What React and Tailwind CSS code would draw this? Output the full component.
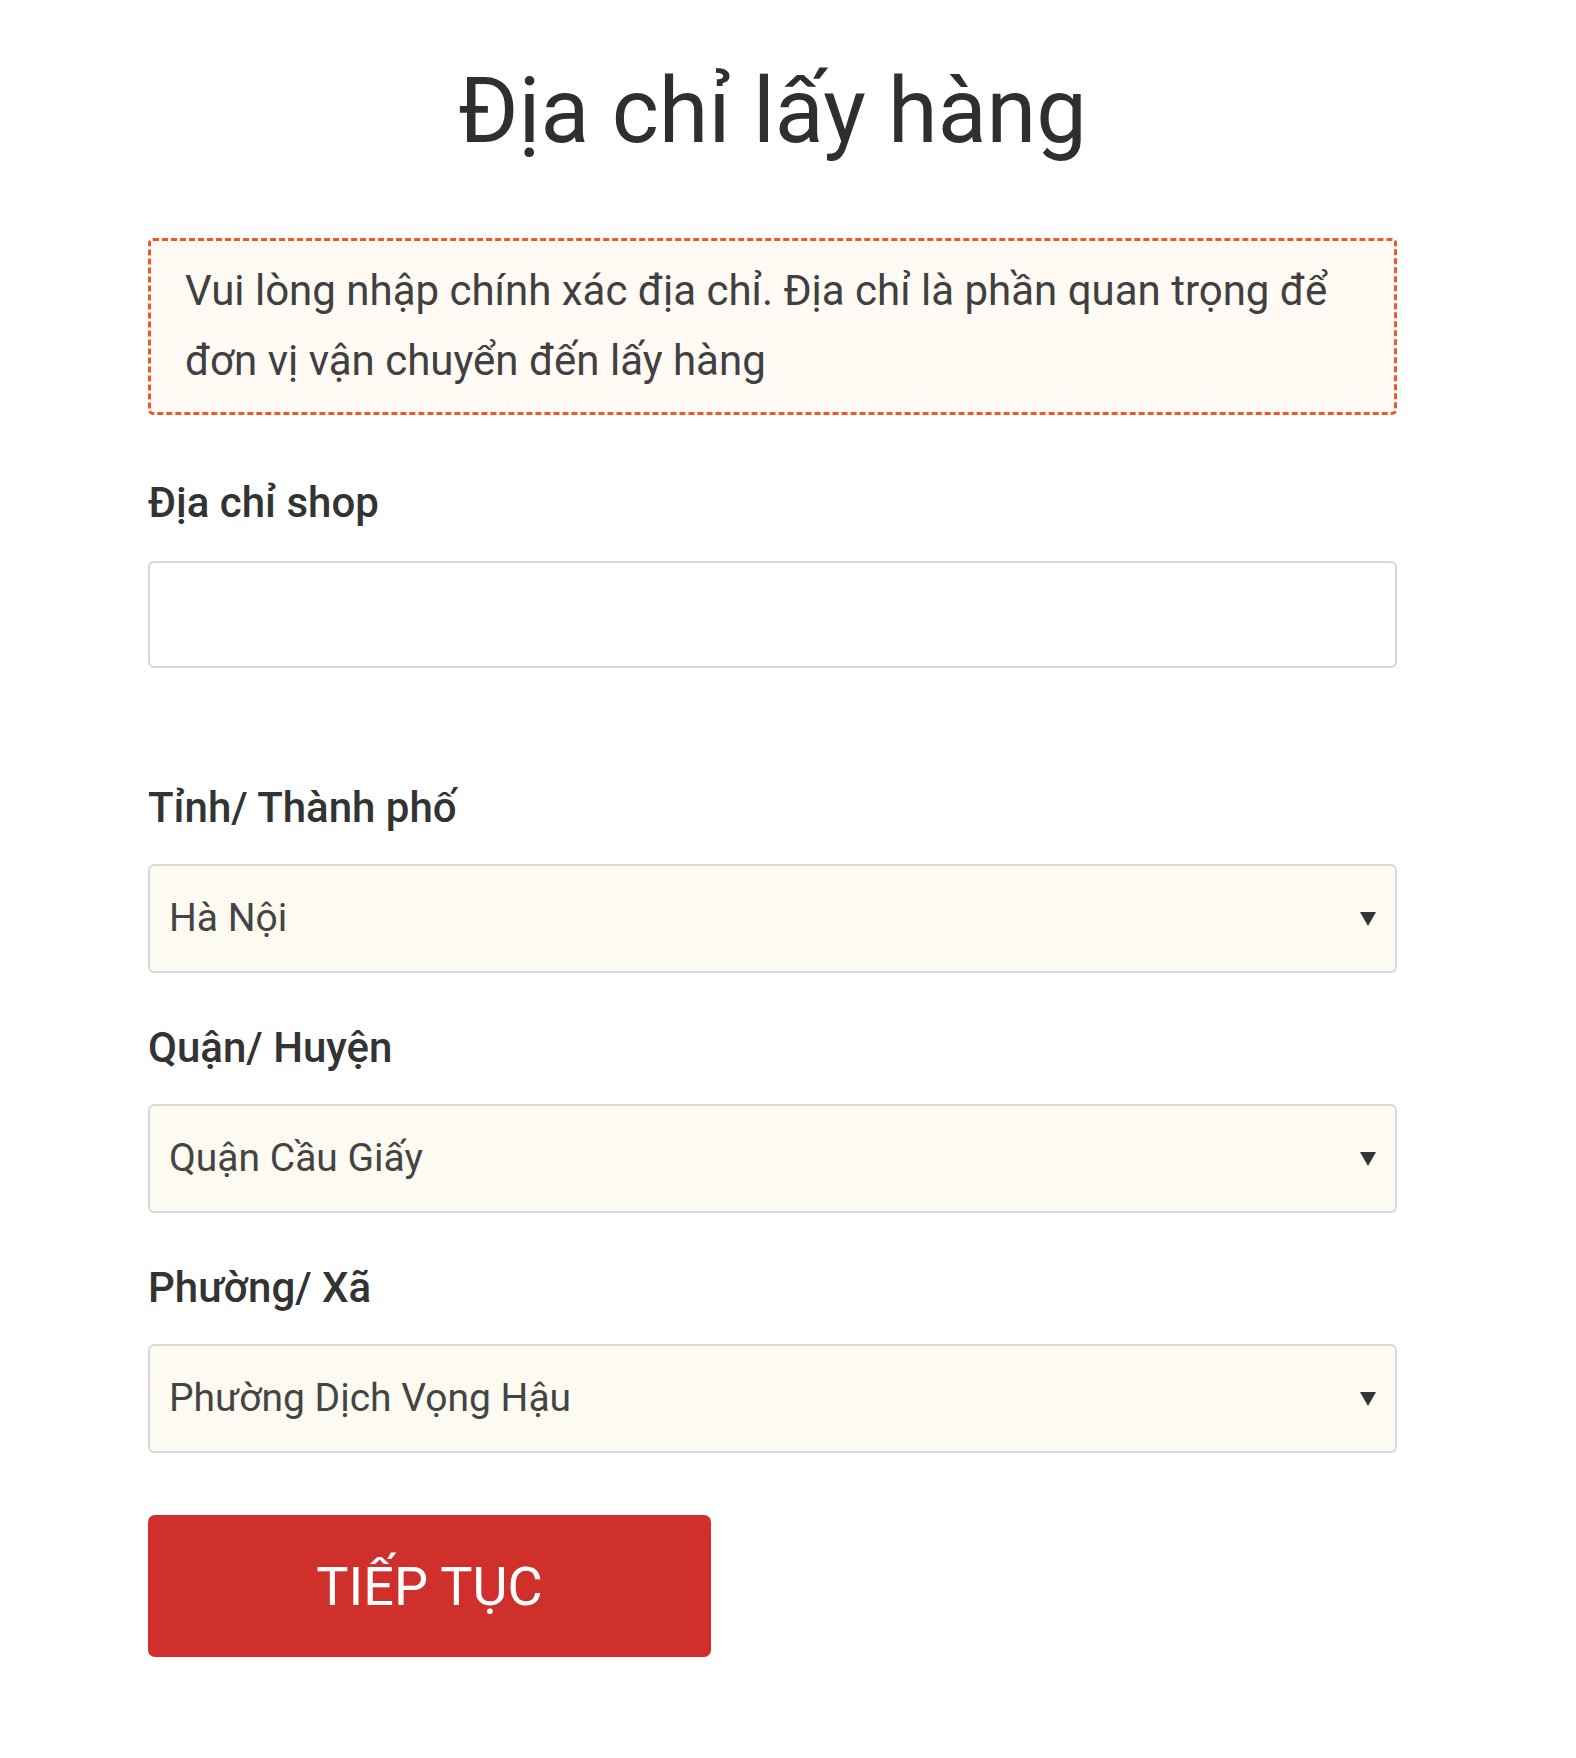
import React from "react";

const fields = [
    { label: "Tỉnh/ Thành phố", value: "Hà Nội" },
    { label: "Quận/ Huyện", value: "Quận Cầu Giấy" },
    { label: "Phường/ Xã", value: "Phường Dịch Vọng Hậu" },
];

function Arrow() {
    return (
        <svg width="18" height="16" viewBox="0 0 18 16" className="shrink-0">
            <polygon points="1,1 17,1 9,15" fill="#333333" />
        </svg>
    );
}

class App extends React.Component {
    render() {
        return (
            <div className="min-h-[1758px] bg-white font-['Roboto','Liberation_Sans',sans-serif] text-[#333]">
                <div className="ml-[148px] w-[1249px] pt-[58px]">
                    <h1 className="text-center text-[90px] leading-[108px] font-normal text-[#2f2f2f]">
                        Địa chỉ lấy hàng
                    </h1>

                    <div className="mt-[72px] rounded-[5px] border-[3px] border-dashed border-[#f0582c] bg-[#fffaf3] pl-[34px] pr-[30px] pt-[15px] pb-[16px] text-[42px] leading-[70px] text-[#404040]">
                        Vui lòng nhập chính xác địa chỉ. Địa chỉ là phần quan trọng để
                        <br />
                        đơn vị vận chuyển đến lấy hàng
                    </div>

                    <label className="mt-[64px] block text-[42px] leading-[48px] font-medium text-[#333]">
                        Địa chỉ shop
                    </label>
                    <input
                        type="text"
                        className="mt-[34px] block h-[107px] w-full rounded-[6px] border-2 border-[#d6d6d6] bg-white px-[19px] text-[39px] outline-none"
                    />

                    <div className="mt-[116px] flex flex-col gap-[51px]">
                        {fields.map((f) => (
                            <div key={f.label}>
                                <label className="block text-[42px] leading-[48px] font-medium text-[#333]">
                                    {f.label}
                                </label>
                                <div className="mt-[32px] flex h-[109px] items-center justify-between rounded-[6px] border-2 border-[#d9d9d9] bg-[#fdfaf2] pl-[19px] pr-[18px]">
                                    <span className="text-[39px] text-[#444]">{f.value}</span>
                                    <Arrow />
                                </div>
                            </div>
                        ))}
                    </div>

                    <button className="mt-[62px] flex h-[142px] w-[563px] items-center justify-center rounded-[7px] bg-[#d0302c] text-[54px] text-white">
                        TIẾP TỤC
                    </button>
                </div>
            </div>
        );
    }
}

export default App;
